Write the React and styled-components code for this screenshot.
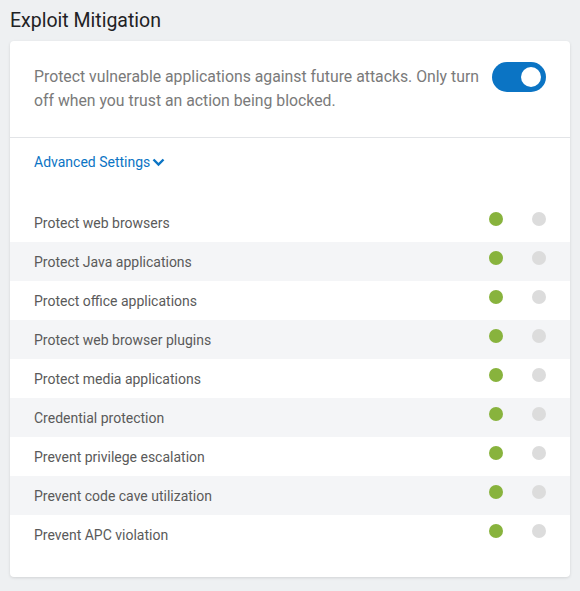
import styled, { createGlobalStyle } from 'styled-components';

const COLORS = {
  page: '#eef0f2',
  title: '#1f2225',
  text: '#7a7a7a',
  label: '#5a5a5a',
  blue: '#0b74c4',
  green: '#88b33d',
  off: '#dcdcdc',
  stripe: '#f4f5f7',
  line: '#e2e4e7',
};

const SETTINGS = [
  'Protect web browsers',
  'Protect Java applications',
  'Protect office applications',
  'Protect web browser plugins',
  'Protect media applications',
  'Credential protection',
  'Prevent privilege escalation',
  'Prevent code cave utilization',
  'Prevent APC violation',
];

const GlobalStyle = createGlobalStyle`
  body {
    margin: 0;
    background: ${COLORS.page};
    font-family: Roboto, "Liberation Sans", sans-serif;
  }
`;

const App = () => {
  return (
    <Page>
      <GlobalStyle />
      <Title>Exploit Mitigation</Title>
      <Card>
        <Intro>
          <Description>
            Protect vulnerable applications against future attacks. Only turn off when you trust an action being
            blocked.
          </Description>
          <Toggle aria-label="Exploit Mitigation" $on />
        </Intro>

        <Advanced>
          <AdvancedLink>
            Advanced Settings
            <svg width="13" height="10" viewBox="0 0 13 10">
              <path d="M1.5 2.5 L6.5 7.5 L11.5 2.5" fill="none" stroke="currentColor" strokeWidth="2.4" />
            </svg>
          </AdvancedLink>
        </Advanced>

        <List>
          {SETTINGS.map((name) => (
            <Row key={name}>
              <Label>{name}</Label>
              <Dots>
                <Dot $color={COLORS.green} />
                <Dot $color={COLORS.off} />
              </Dots>
            </Row>
          ))}
        </List>
      </Card>
    </Page>
  );
};

const Page = styled.div`
  padding: 0 10px 14px;
`;

const Title = styled.h1`
  margin: 0;
  padding: 9px 0 8px;
  font-size: 19.5px;
  line-height: 24px;
  font-weight: 400;
  color: ${COLORS.title};
`;

const Card = styled.div`
  background: #fff;
  border-radius: 4px;
  box-shadow: 0 1px 3px rgba(0, 0, 0, 0.12);
  padding-bottom: 23px;
`;

const Intro = styled.div`
  display: flex;
  align-items: flex-start;
  justify-content: space-between;
  gap: 8px;
  padding: 24px;
  border-bottom: 1px solid ${COLORS.line};
`;

const Description = styled.p`
  margin: 0;
  width: 455px;
  font-size: 15.8px;
  line-height: 24px;
  color: ${COLORS.text};
`;

const Toggle = styled.button`
  position: relative;
  flex: none;
  width: 54px;
  height: 30px;
  margin-top: -3px;
  border: 0;
  border-radius: 15px;
  padding: 0;
  background: ${(p) => (p.$on ? COLORS.blue : COLORS.off)};

  &::after {
    content: '';
    position: absolute;
    top: 5px;
    left: ${(p) => (p.$on ? '29px' : '5px')};
    width: 20px;
    height: 20px;
    border-radius: 50%;
    background: #fff;
  }
`;

const Advanced = styled.div`
  padding: 13px 24px 30px;
`;

const AdvancedLink = styled.a`
  display: inline-flex;
  align-items: center;
  gap: 2px;
  font-size: 14px;
  line-height: 22px;
  color: ${COLORS.blue};
  cursor: pointer;
`;

const List = styled.div`
  display: flex;
  flex-direction: column;
`;

const Row = styled.div`
  display: flex;
  align-items: center;
  justify-content: space-between;
  height: 39px;
  padding: 0 24px;

  &:nth-child(even) {
    background: ${COLORS.stripe};
  }
`;

const Label = styled.span`
  font-size: 14px;
  color: ${COLORS.label};
`;

const Dots = styled.div`
  display: flex;
  gap: 29px;
  margin-top: -7px;
`;

const Dot = styled.span`
  width: 14px;
  height: 14px;
  border-radius: 50%;
  background: ${(p) => p.$color};
`;

export default App;
